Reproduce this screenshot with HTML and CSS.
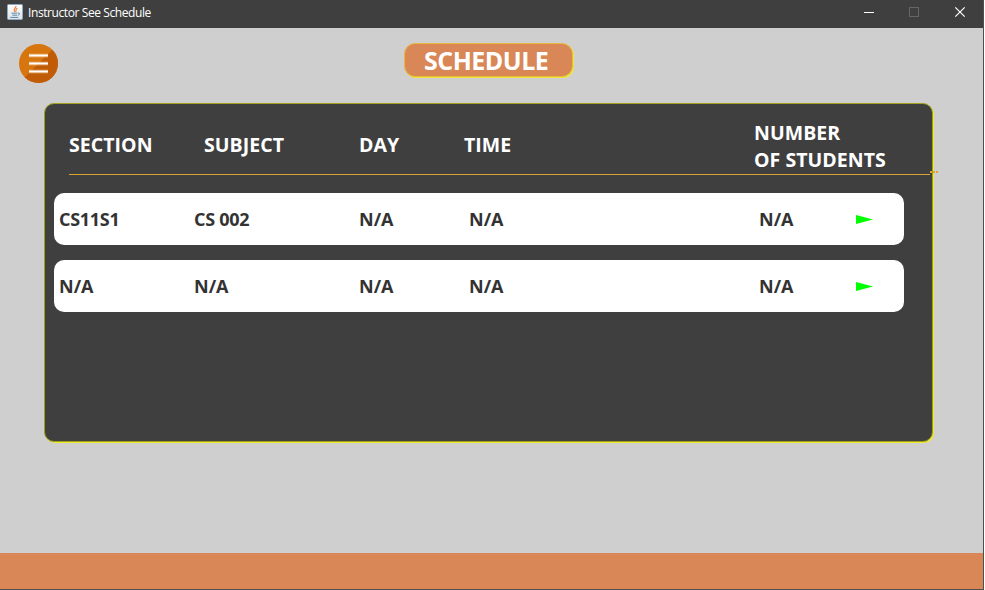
FILE: index.html
```html
<!DOCTYPE html>
<html lang="en">
<head>
<meta charset="utf-8">
<title>Instructor See Schedule</title>
<link rel="stylesheet" href="styles.css">
</head>
<body>
<div class="window">
  <header class="titlebar">
    <svg class="java" width="16" height="16" viewBox="0 0 16 16">
      <defs><linearGradient id="tile" x1="0" y1="0" x2="0" y2="1"><stop offset="0" stop-color="#fff"/><stop offset="1" stop-color="#dde3e8"/></linearGradient></defs>
      <rect x=".5" y=".5" width="15" height="15" rx="1" fill="url(#tile)" stroke="#8fa8bf"/>
      <path d="M9 2C9.200 4 5.600 5 7.600 8M10.300 4.300C8 5.400 9.700 6.400 8.600 8" fill="none" stroke="#ee7a28" stroke-width="1.100"/>
      <path d="M4.500 9.200h6M5.300 11.200h4.700M3.200 13.400h8.200M11 9c2.400-.3 2 1.900-.2 2.300" fill="none" stroke="#5f86a8"/>
    </svg>
    <span class="caption">Instructor See Schedule</span>
    <svg class="controls" width="103" height="16" viewBox="0 0 103 16">
      <path d="M0 8.500h10" stroke="#fff"/>
      <rect x="45.500" y="3.500" width="9" height="9" fill="none" stroke="#666"/>
      <path d="M91.300 3.300l9.400 9.400M100.700 3.300l-9.400 9.400" stroke="#fff" stroke-width="1.200"/>
    </svg>
  </header>
  <main class="content">
    <div class="top">
      <svg class="menu" width="40" height="40" viewBox="0 0 40 40">
        <defs><clipPath id="disc"><circle cx="19.500" cy="19.500" r="19.500"/></clipPath></defs>
        <g clip-path="url(#disc)">
          <path d="M0 0h40v40H0z" fill="#d77510"/>
          <path d="M34 5L5 34l8 6h27V5z" fill="#c15d08"/>
          <path d="M10 11.500h19M10 19.500h19M10 27.500h19" stroke="#ffd9a0" stroke-width="4" opacity=".35"/>
          <path d="M10 11.500h19M10 19.500h19M10 27.500h19" stroke="#fff" stroke-width="2"/>
        </g>
      </svg>
      <h1 class="title">SCHEDULE</h1>
    </div>
    <section class="panel">
      <div class="head">
        <span>SECTION</span>
        <span>SUBJECT</span>
        <span>DAY</span>
        <span>TIME</span>
        <span class="h-number">NUMBER<br>OF STUDENTS</span>
        <i class="more"><b></b><b></b><b></b></i>
      </div>
      <div class="row">
        <span class="code">CS11S1</span><span class="code">CS 002</span><span>N/A</span><span>N/A</span><span>N/A</span>
        <svg width="17" height="9" viewBox="0 0 17 9"><path d="M0 0l17 4.500L0 9z" fill="#0f0"/></svg>
      </div>
      <div class="row">
        <span>N/A</span><span>N/A</span><span>N/A</span><span>N/A</span><span>N/A</span>
        <svg width="17" height="9" viewBox="0 0 17 9"><path d="M0 0l17 4.500L0 9z" fill="#0f0"/></svg>
      </div>
    </section>
  </main>
  <footer class="footer"></footer>
</div>
</body>
</html>
```
FILE: styles.css
```css
* { box-sizing: border-box; }
body { margin: 0; background: #fff; overflow: hidden; font-family: "Open Sans", "Noto Sans", sans-serif; }
.window { width: 984px; height: 590px; display: flex; flex-direction: column; background: #cfcfcf; border-right: 1px solid #505050; border-bottom: 1px solid #505050; }
.titlebar { height: 28px; background: #3f3f3f; display: flex; padding-left: 7px; flex: none; }
.java { margin-top: 4px; }
.caption { color: #fff; font-size: 12px; line-height: 16px; margin: 5px 0 0 5px; letter-spacing: -0.41px; white-space: nowrap; }
.controls { margin: 4px 16px 0 auto; }
.content { flex: 1; min-height: 0; }
.top { height: 75px; display: flex; align-items: flex-start; }
.menu { margin: 16px 0 0 19px; }
.title { margin: 15px 0 0 345px; width: 169px; height: 34px; padding-left: 19px; border: 1px solid #e6b93a; border-radius: 11px; box-shadow: 1px 1px 0 #f0e838; background: #d98757; color: #fff; font-size: 25px; line-height: 32px; font-weight: 700; letter-spacing: -0.5px; white-space: nowrap; }
.panel { margin-left: 44px; width: 889px; height: 339px; border: 1px solid #a0a01c; border-radius: 10px; box-shadow: 1px 1px 0 #ecec2c; background: #3f3f3f; padding: 0 0 0 9px; }
.head { position: relative; display: grid; grid-template-columns: 135px 155px 105px 290px 176px; align-items: center; width: 861px; height: 71px; margin: 0 0 18px 15px; padding-top: 10px; border-bottom: 1px solid #dca42f; color: #fff; font-size: 19.500px; line-height: 27px; font-weight: 700; letter-spacing: 0.05px; white-space: nowrap; }
.h-number { padding-top: 4px; }
.more { position: absolute; right: -8px; bottom: 1px; display: flex; gap: 1px; }
.more b { width: 2px; height: 2px; background: #dca42f; }
.row { display: grid; grid-template-columns: 135px 165px 110px 290px 97px 17px; align-items: center; width: 850px; height: 52px; margin-bottom: 15px; padding-left: 5px; border-radius: 10px; background: #fff; color: #333; font-size: 18px; line-height: 24px; font-weight: 700; white-space: nowrap; }
.code { letter-spacing: -0.3px; }
.footer { height: 36px; flex: none; background: #d98757; }
```
